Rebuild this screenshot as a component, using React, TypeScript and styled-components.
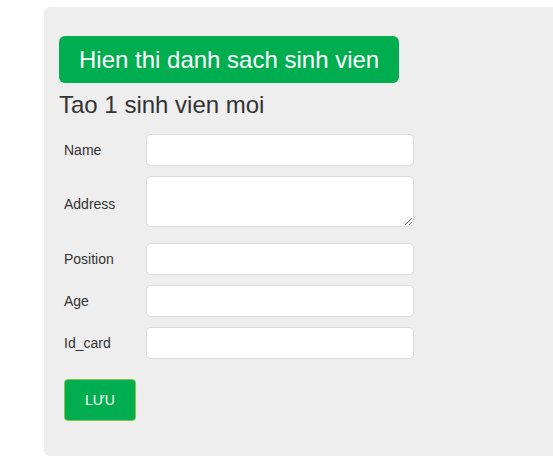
import React from "react";
import styled, { createGlobalStyle } from "styled-components";

const Global = createGlobalStyle`
  html, body { margin: 0; padding: 0; background: #fff; }
  body { font-family: "Liberation Sans", Arial, sans-serif; color: #333; }
`;

const Page = styled.div`
  padding: 7px 0 2px 44px;
`;

const Panel = styled.div`
  background: #eeeeee;
  border-radius: 6px 0 0 6px;
  padding: 29px 15px 35px 15px;
  height: 449px;
  box-sizing: border-box;
`;

const BigButton = styled.button`
  display: block;
  background: #00ae4f;
  color: #fff;
  border: none;
  border-radius: 6px;
  font-family: "Liberation Sans", Arial, sans-serif;
  font-size: 24px;
  line-height: 27px;
  height: 47px;
  padding: 0 20px;
  width: 340px;
  white-space: nowrap;
  text-align: center;
`;

const Title = styled.h3`
  margin: 8px 0 15px 0;
  font-size: 24px;
  font-weight: 400;
  line-height: 28px;
  color: #333;
`;

const Form = styled.form`
  display: grid;
  grid-template-columns: 83px 268px;
  row-gap: 10px;
  padding-left: 5px;
  align-items: center;
`;

const Label = styled.label<{ $lift?: number }>`
  font-size: 14px;
  color: #333;
  margin-bottom: ${(p) => p.$lift ?? 0}px;
`;

const Field = styled.input`
  box-sizing: border-box;
  height: 32px;
  width: 268px;
  background: #fff;
  border: 1px solid #dcdcdc;
  border-radius: 5px;
  margin: 0 0 0 -1px;
`;

const Area = styled.textarea`
  box-sizing: border-box;
  height: 51px;
  width: 268px;
  background: #fff;
  border: 1px solid #dcdcdc;
  border-radius: 5px;
  margin: 0 0 6px -1px;
  display: block;
`;

const SaveButton = styled.button`
  grid-column: 1 / 2;
  margin-top: 10px;
  width: 72px;
  height: 42px;
  background: #00ae4f;
  color: #fff;
  border: 1px solid #8bc34a;
  border-radius: 4px;
  font-family: "Liberation Sans", Arial, sans-serif;
  font-size: 14px;
`;

export default function App() {
  return (
    <>
      <Global />
      <Page>
        <Panel>
          <BigButton>Hien thi danh sach sinh vien</BigButton>
          <Title>Tao 1 sinh vien moi</Title>
          <Form onSubmit={(e) => e.preventDefault()}>
            <Label>Name</Label>
            <Field />
            <Label $lift={2}>Address</Label>
            <Area />
            <Label>Position</Label>
            <Field />
            <Label>Age</Label>
            <Field />
            <Label>Id_card</Label>
            <Field />
            <SaveButton>LƯU</SaveButton>
          </Form>
        </Panel>
      </Page>
    </>
  );
}
